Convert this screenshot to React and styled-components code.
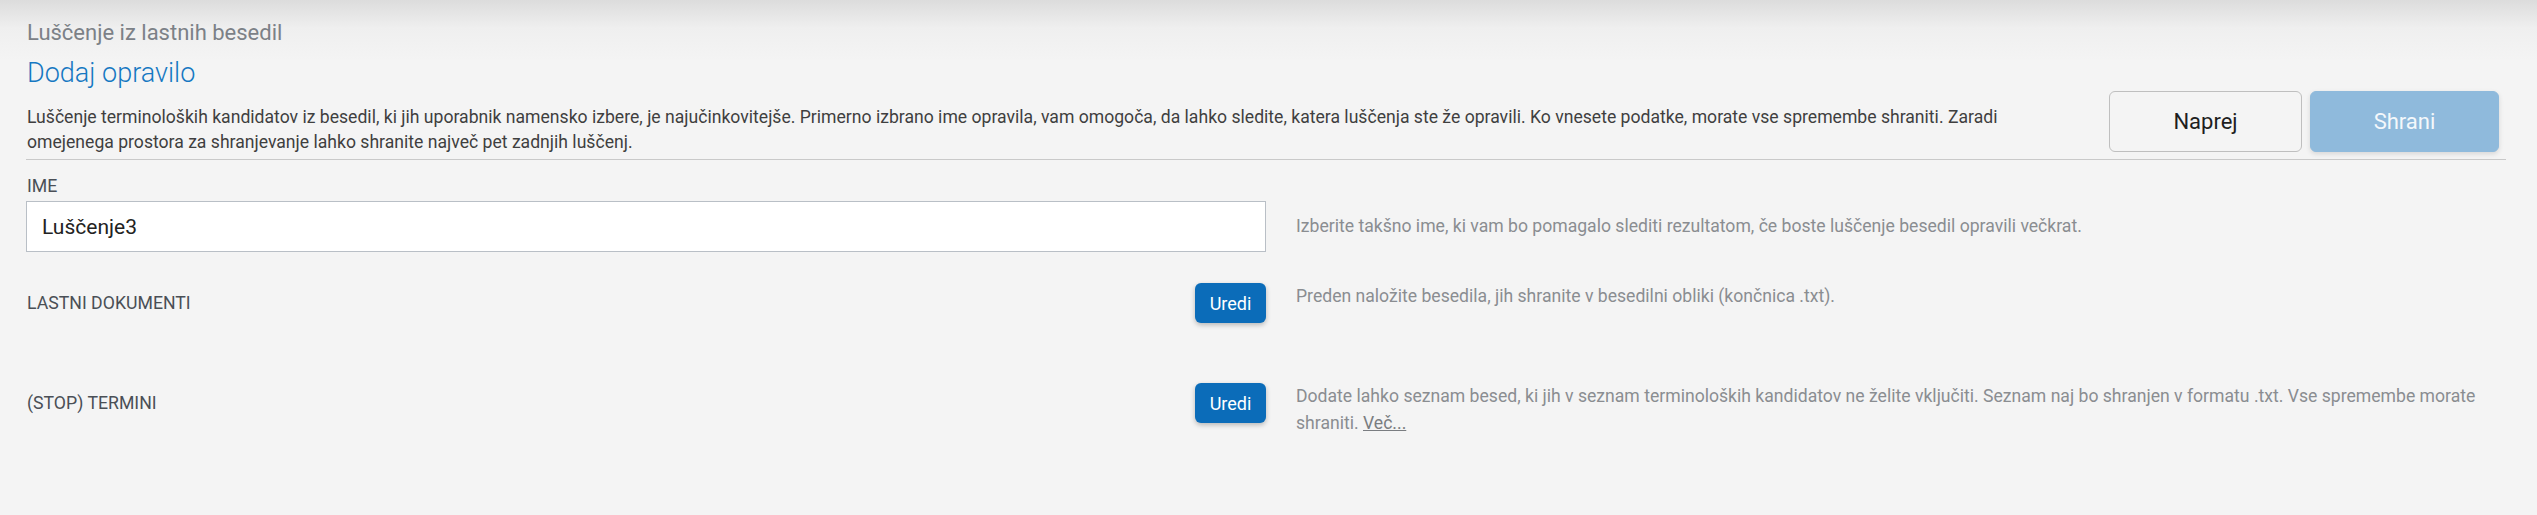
import styled, { createGlobalStyle } from "styled-components";

const GlobalStyle = createGlobalStyle`
  html, body {
    margin: 0;
    background: #f4f4f4;
  }
  body {
    font-family: Roboto, "Liberation Sans", sans-serif;
    color: #3d3d3d;
  }
`;

const Page = styled.div`
  min-height: 515px;
  box-sizing: border-box;
  padding: 20px 31px 0 26px;
  background: linear-gradient(#dcdcdc 0, #efefef 28px, #f4f4f4 60px);
`;

const Subtitle = styled.h3`
  margin: 0 0 0 1px;
  font-size: 22px;
  line-height: 26px;
  font-weight: 400;
  color: #7c8187;
`;

const Header = styled.div`
  display: flex;
  align-items: flex-end;
  gap: 70px;
`;

const Intro = styled.div`
  flex: 1;
  padding-left: 1px;
`;

const Heading = styled.h1`
  margin: 10px 0 0;
  font-size: 27px;
  line-height: 34px;
  font-weight: 300;
  color: #1678c2;
`;

const Lead = styled.p`
  margin: 15px 0 0;
  font-size: 17.6px;
  line-height: 25px;
  color: #3f3f3f;
`;

const Actions = styled.div`
  display: flex;
  gap: 8px;
  margin-bottom: 3px;
  margin-right: 7px;
`;

const BigButton = styled.button`
  box-sizing: border-box;
  width: ${p => p.$width}px;
  height: 61px;
  border-radius: 6px;
  font-family: inherit;
  font-size: 22px;
  cursor: pointer;
  border: 1px solid ${p => (p.$primary ? "#8fbadc" : "#bfbfbf")};
  background: ${p => (p.$primary ? "#8fbadc" : "#f4f4f4")};
  color: ${p => (p.$primary ? "#f4f8fb" : "#1e1e1e")};
  box-shadow: ${p => (p.$primary ? "0 2px 5px rgba(0,0,0,0.12)" : "none")};
`;

const Divider = styled.hr`
  margin: 4px 0 0;
  border: 0;
  border-top: 1px solid #c9c9c9;
`;

const FieldRow = styled.div`
  display: grid;
  grid-template-columns: 1240px 1fr;
  column-gap: 30px;
  align-items: start;
  margin-top: ${p => p.$top}px;
`;

const Stack = styled.div`
  display: flex;
  flex-direction: column;
  gap: 5px;
`;

const Inline = styled.div`
  display: flex;
  align-items: center;
  justify-content: space-between;
`;

const Label = styled.label`
  padding-left: 1px;
  font-size: 17.7px;
  line-height: 20px;
  text-transform: uppercase;
  color: #4a4f56;
`;

const TextInput = styled.input`
  box-sizing: border-box;
  width: 100%;
  height: 51px;
  padding: 0 15px;
  border: 1px solid #b9bfc6;
  background: #fff;
  font-family: inherit;
  font-size: 21px;
  color: #222;
  outline: none;
`;

const EditButton = styled.button`
  width: 71px;
  height: 40px;
  border: 0;
  border-radius: 6px;
  background: #0b6cb9;
  color: #fff;
  font-family: inherit;
  font-size: 18px;
  box-shadow: 0 2px 5px rgba(0, 0, 0, 0.25);
  cursor: pointer;
`;

const Help = styled.p`
  margin: 0;
  padding-top: ${p => p.$offset || 0}px;
  font-size: 17.6px;
  line-height: 27px;
  color: #8a8d91;
`;

const MoreLink = styled.a`
  color: #7a7d81;
  text-decoration: underline;
`;

export default function App() {
  return (
    <>
      <GlobalStyle />
      <Page>
        <Subtitle>Luščenje iz lastnih besedil</Subtitle>
        <Header>
          <Intro>
            <Heading>Dodaj opravilo</Heading>
            <Lead>
              Luščenje terminoloških kandidatov iz besedil, ki jih uporabnik namensko izbere, je najučinkovitejše. Primerno izbrano ime opravila, vam omogoča, da lahko sledite, katera luščenja ste že opravili. Ko vnesete podatke, morate vse spremembe shraniti. Zaradi omejenega prostora za shranjevanje lahko shranite največ pet zadnjih luščenj.
            </Lead>
          </Intro>
          <Actions>
            <BigButton $width={193}>Naprej</BigButton>
            <BigButton $width={189} $primary>Shrani</BigButton>
          </Actions>
        </Header>
        <Divider />

        <FieldRow $top={16}>
          <Stack>
            <Label htmlFor="ime">Ime</Label>
            <TextInput id="ime" defaultValue="Luščenje3" />
          </Stack>
          <Help $offset={37}>
            Izberite takšno ime, ki vam bo pomagalo slediti rezultatom, če boste luščenje besedil opravili večkrat.
          </Help>
        </FieldRow>

        <FieldRow $top={31}>
          <Inline>
            <Label>Lastni dokumenti</Label>
            <EditButton>Uredi</EditButton>
          </Inline>
          <Help>Preden naložite besedila, jih shranite v besedilni obliki (končnica .txt).</Help>
        </FieldRow>

        <FieldRow $top={60}>
          <Inline>
            <Label>(Stop) termini</Label>
            <EditButton>Uredi</EditButton>
          </Inline>
          <Help>
            Dodate lahko seznam besed, ki jih v seznam terminoloških kandidatov ne želite vključiti. Seznam naj bo shranjen v formatu .txt. Vse spremembe morate shraniti. <MoreLink href="#">Več...</MoreLink>
          </Help>
        </FieldRow>
      </Page>
    </>
  );
}
